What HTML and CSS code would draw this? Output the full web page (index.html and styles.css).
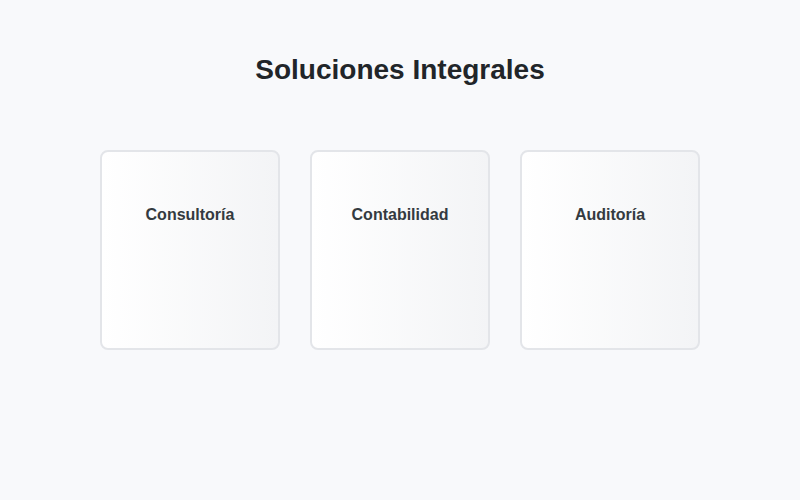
FILE: index.html
```html
<!DOCTYPE html>
<html lang="es">
<head>
<meta charset="utf-8">
<title>Soluciones Integrales</title>
<link rel="stylesheet" href="styles.css">
</head>
<body>
<main class="page">
  <h1 class="title">Soluciones Integrales</h1>
  <section class="cards">
    <div class="card"><h3 class="card-title">Consultoría</h3></div>
    <div class="card"><h3 class="card-title">Contabilidad</h3></div>
    <div class="card"><h3 class="card-title">Auditoría</h3></div>
  </section>
</main>
</body>
</html>
```
FILE: styles.css
```css
html, body {
  margin: 0;
  padding: 0;
  background: #f8f9fb;
  font-family: "Liberation Sans", Arial, sans-serif;
}
.page {
  width: 800px;
  height: 500px;
  box-sizing: border-box;
  padding-top: 53px;
}
.title {
  margin: 0;
  text-align: center;
  font-size: 28px;
  line-height: 34px;
  font-weight: 700;
  color: #212529;
}
.cards {
  display: flex;
  justify-content: center;
  gap: 30px;
  margin-top: 63px;
}
.card {
  width: 180px;
  height: 200px;
  box-sizing: border-box;
  border: 2px solid #e3e5e9;
  border-radius: 8px;
  background: linear-gradient(90deg, #ffffff 0%, #f3f4f6 100%);
  padding-top: 53px;
}
.card-title {
  margin: 0;
  text-align: center;
  font-size: 16px;
  line-height: 20px;
  font-weight: 700;
  color: #343a40;
}
```
